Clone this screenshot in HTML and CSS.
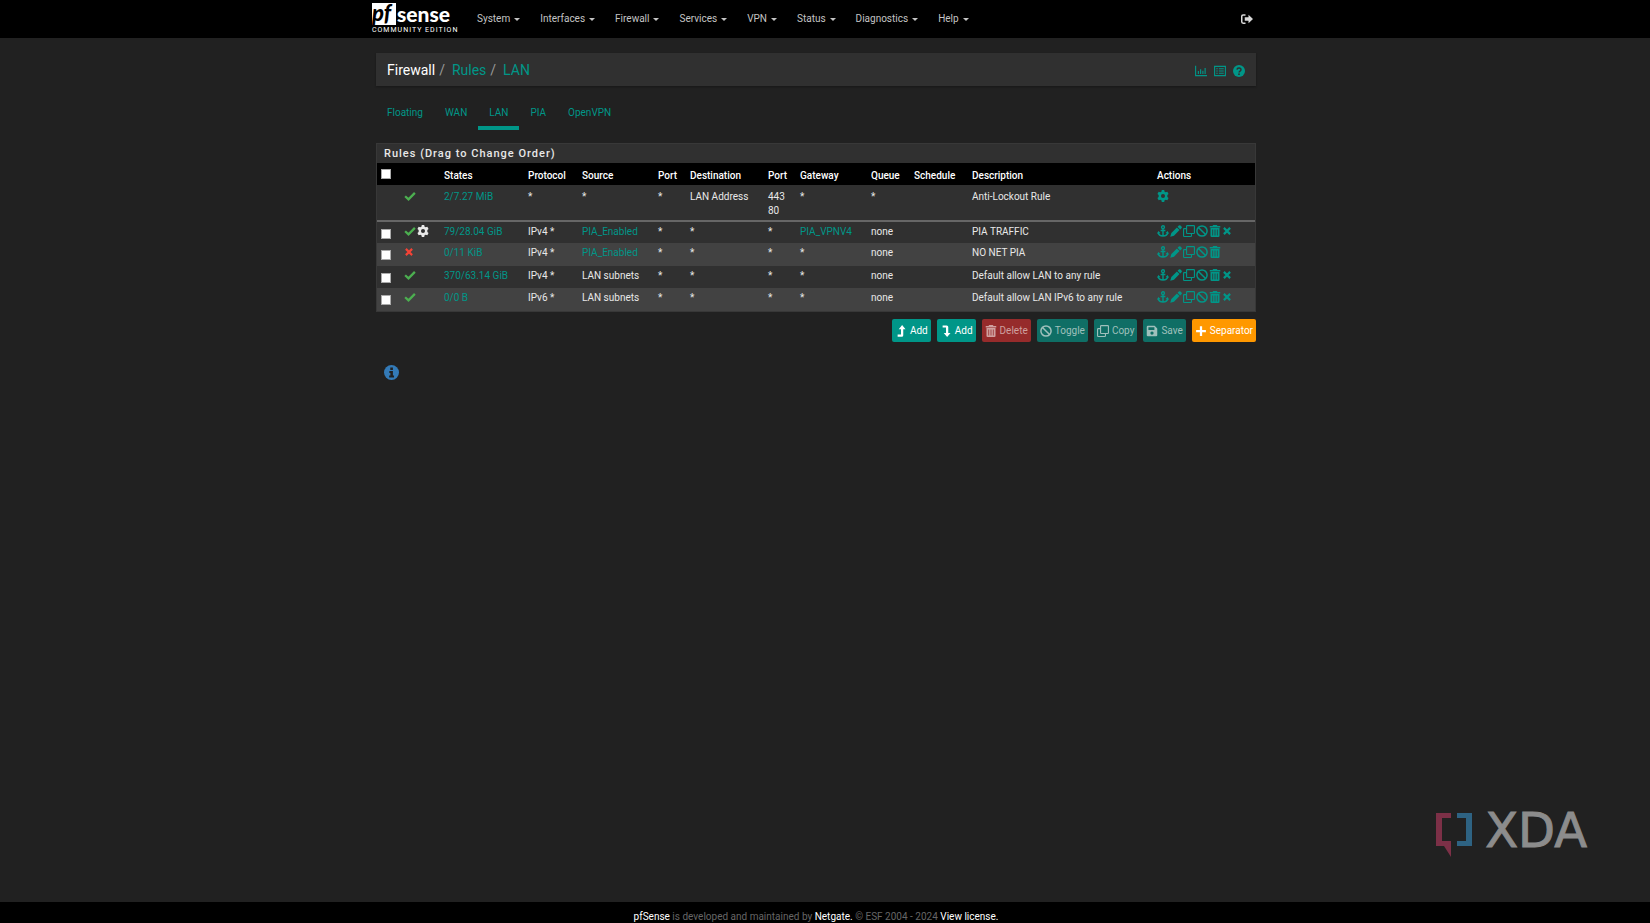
FILE: index.html
```
<!DOCTYPE html>
<html lang="en">
<head>
<meta charset="utf-8">
<title>pfSense - Firewall: Rules: LAN</title>
<link rel="stylesheet" href="styles.css">
</head>
<body>
<svg class="sprite" aria-hidden="true">
  <symbol id="check" viewBox="0 0 16 16"><path d="M1.5 8.300 6 12.500 14.500 3.800" fill="none" stroke="currentColor" stroke-width="3"/></symbol>
  <symbol id="times" viewBox="0 0 16 16"><path d="M3 3 13 13M13 3 3 13" fill="none" stroke="currentColor" stroke-width="3.4"/></symbol>
  <symbol id="cog" viewBox="0 0 16 16"><path fill="currentColor" fill-rule="evenodd" d="M6.4 0h3.2l.5 2.2 1.5.9 2.2-.7 1.6 2.8L13.800 6.800v2.400l1.600 1.600-1.600 2.800-2.200-.7-1.500.9-.5 2.200H6.400l-.5-2.200-1.500-.9-2.200.7L.6 10.800l1.600-1.600V6.800L.6 5.200l1.600-2.800 2.200.7 1.500-.9zM8 5.300a2.700 2.700 0 1 0 0 5.400 2.700 2.700 0 0 0 0-5.400z"/></symbol>
  <symbol id="anchor" viewBox="0 0 16 16"><g fill="none" stroke="currentColor" stroke-width="1.900"><circle cx="8" cy="2.900" r="1.900"/><path d="M8 5v9.500M4.800 7.300h6.400M1.700 9.800c.4 3.200 3 4.900 6.300 4.900s5.900-1.700 6.300-4.900"/></g><path fill="currentColor" d="M0 11.500 1.900 8l2.600 2.800zM16 11.500 14.100 8l-2.600 2.800z"/></symbol>
  <symbol id="pencil" viewBox="0 0 16 16"><path fill="currentColor" d="M11.800.7a1.600 1.600 0 0 1 2.200 0l1.300 1.300a1.600 1.600 0 0 1 0 2.200l-1.700 1.700-3.500-3.500zM9.200 3.300l3.500 3.500-7.400 7.400L.3 15.700l1.500-5z"/></symbol>
  <symbol id="clone" viewBox="0 0 16 16"><g fill="none" stroke="currentColor" stroke-width="1.500"><rect x="4.750" y=".750" width="10.500" height="10.500" rx="1"/><path d="M4.500 4.750H1.750a1 1 0 0 0-1 1v8.500a1 1 0 0 0 1 1h8.500a1 1 0 0 0 1-1V11.500"/></g></symbol>
  <symbol id="ban" viewBox="0 0 16 16"><g fill="none" stroke="currentColor" stroke-width="2"><circle cx="8" cy="8" r="6.800"/><path d="m3.300 3.300 9.400 9.400"/></g></symbol>
  <symbol id="trash" viewBox="0 0 16 16"><path fill="currentColor" fill-rule="evenodd" d="M5.500 0h5l.8 1.200H15v2H1v-2h3.700zM2 4h12v10.500a1.500 1.500 0 0 1-1.500 1.500h-9A1.500 1.500 0 0 1 2 14.500zM4.500 6v8h1V6zm3 0v8h1V6zm3 0v8h1V6z"/></symbol>
  <symbol id="up" viewBox="0 0 16 16"><path fill="currentColor" d="M9.500 0 14 5.500h-3v8a2 2 0 0 1-2 2H3.500v-2.800H8V5.500H5z"/></symbol>
  <symbol id="down" viewBox="0 0 16 16"><path fill="currentColor" d="M9.500 16 14 10.500h-3v-8a2 2 0 0 0-2-2H3.500v2.800H8v7.200H5z"/></symbol>
  <symbol id="save" viewBox="0 0 16 16"><path fill="currentColor" fill-rule="evenodd" d="M2 1h9.500L15 4.500V13.500A1.500 1.500 0 0 1 13.500 15h-11A1.500 1.500 0 0 1 1 13.500V2.500A1.500 1.500 0 0 1 2.500 1zM3.200 3v3.500h8V3zM8 8.500a2.200 2.200 0 1 0 0 4.400 2.200 2.200 0 0 0 0-4.400z"/></symbol>
  <symbol id="plus" viewBox="0 0 16 16"><path d="M8 1.500v13M1.500 8h13" stroke="currentColor" stroke-width="3"/></symbol>
  <symbol id="logout" viewBox="0 0 16 16"><path d="M6 2.500H2.800a1.800 1.800 0 0 0-1.800 1.800v7.400a1.800 1.800 0 0 0 1.800 1.800H6" fill="none" stroke="currentColor" stroke-width="2"/><path fill="currentColor" d="M10 2.200 16 8l-6 5.800v-3.600H5V5.800h5z"/></symbol>
  <symbol id="chart" viewBox="0 0 16 16"><path d="M.8 1v13.200H16M4.500 12V8M7.500 12V5.500M10.500 12V7.500M13.500 12V4" fill="none" stroke="currentColor" stroke-width="1.500"/></symbol>
  <symbol id="list" viewBox="0 0 16 16"><path d="M.8 1.800h14.400v12.400H.8zM3 5h2M6.500 5H13M3 8h2M6.500 8H13M3 11h2M6.500 11H13" fill="none" stroke="currentColor" stroke-width="1.500"/></symbol>
  <symbol id="question" viewBox="0 0 16 16"><circle cx="8" cy="8" r="8" fill="currentColor"/><path d="M5.300 6.200c.2-3 5.400-2.900 5.400.1 0 1.900-2.600 1.900-2.600 3.600" fill="none" stroke="#303030" stroke-width="1.900"/><circle cx="8" cy="12.200" r="1.200" fill="#303030"/></symbol>
  <symbol id="info" viewBox="0 0 16 16"><circle cx="8" cy="8" r="8" fill="currentColor"/><path d="M6.700 2.700h2.800v2.500H6.700zM5.700 6.500h3.800v4.800h1.200v2H5.500v-2h1.300V8.500H5.700z" fill="#212121"/></symbol>
</svg>

<header class="navbar">
  <div class="container navbar-row">
    <a class="brand" href="#" aria-label="pfSense Community Edition">
      <span class="brand-name"><span class="brand-pf">pf</span><span class="brand-sense">sense</span></span>
      <span class="brand-edition">COMMUNITY EDITION</span>
    </a>
    <nav class="menu">
      <a href="#">System</a><a href="#">Interfaces</a><a href="#">Firewall</a><a href="#">Services</a><a href="#">VPN</a><a href="#">Status</a><a href="#">Diagnostics</a><a href="#">Help</a>
    </nav>
    <a class="logout" href="#" aria-label="Log out"><svg class="icon"><use href="#logout"/></svg></a>
  </div>
</header>

<main class="container page">
  <div class="page-header">
    <nav class="crumbs"><span>Firewall</span><i>/</i><a href="#">Rules</a><i>/</i><a href="#">LAN</a></nav>
    <div class="shortcuts">
      <a href="#" aria-label="Status"><svg class="icon"><use href="#chart"/></svg></a>
      <a href="#" aria-label="Logs"><svg class="icon"><use href="#list"/></svg></a>
      <a href="#" aria-label="Help"><svg class="icon"><use href="#question"/></svg></a>
    </div>
  </div>

  <nav class="tabs">
    <a href="#">Floating</a><a href="#">WAN</a><a class="active" href="#">LAN</a><a href="#">PIA</a><a href="#">OpenVPN</a>
  </nav>

  <section class="panel">
    <h2>Rules (Drag to Change Order)</h2>
    <table>
      <colgroup><col class="c-box"><col class="c-icon"><col class="c-states"><col class="c-proto"><col class="c-source"><col class="c-port"><col class="c-dest"><col class="c-port"><col class="c-gate"><col class="c-queue"><col class="c-sched"><col><col class="c-actions"></colgroup>
      <thead>
        <tr><th><input type="checkbox" aria-label="Select all"></th><th></th><th>States</th><th>Protocol</th><th>Source</th><th>Port</th><th>Destination</th><th>Port</th><th>Gateway</th><th>Queue</th><th>Schedule</th><th>Description</th><th>Actions</th></tr>
      </thead>
      <tbody class="fixed-rules">
        <tr><td></td><td><svg class="icon pass"><use href="#check"/></svg></td><td><a href="#">2/7.27 MiB</a></td><td>*</td><td>*</td><td>*</td><td>LAN Address</td><td>443<br>80</td><td>*</td><td>*</td><td></td><td>Anti-Lockout Rule</td><td><a href="#" aria-label="Settings"><svg class="icon"><use href="#cog"/></svg></a></td></tr>
      </tbody>
      <tbody class="user-rules">
        <tr><td><input type="checkbox" aria-label="Select PIA TRAFFIC"></td><td><div class="icons"><svg class="icon pass"><use href="#check"/></svg><svg class="icon"><use href="#cog"/></svg></div></td><td><a href="#">79/28.04 GiB</a></td><td>IPv4 *</td><td><a href="#">PIA_Enabled</a></td><td>*</td><td>*</td><td>*</td><td><a href="#">PIA_VPNV4</a></td><td>none</td><td></td><td>PIA TRAFFIC</td>
          <td><div class="icons"><a href="#" aria-label="Move"><svg class="icon"><use href="#anchor"/></svg></a><a href="#" aria-label="Edit"><svg class="icon"><use href="#pencil"/></svg></a><a href="#" aria-label="Copy"><svg class="icon"><use href="#clone"/></svg></a><a href="#" aria-label="Disable"><svg class="icon"><use href="#ban"/></svg></a><a href="#" aria-label="Delete"><svg class="icon"><use href="#trash"/></svg></a><a class="kill" href="#" aria-label="Kill states"><svg class="icon"><use href="#times"/></svg></a></div></td></tr>
        <tr><td><input type="checkbox" aria-label="Select NO NET PIA"></td><td><svg class="icon block"><use href="#times"/></svg></td><td><a href="#">0/11 KiB</a></td><td>IPv4 *</td><td><a href="#">PIA_Enabled</a></td><td>*</td><td>*</td><td>*</td><td>*</td><td>none</td><td></td><td>NO NET PIA</td>
          <td><div class="icons"><a href="#" aria-label="Move"><svg class="icon"><use href="#anchor"/></svg></a><a href="#" aria-label="Edit"><svg class="icon"><use href="#pencil"/></svg></a><a href="#" aria-label="Copy"><svg class="icon"><use href="#clone"/></svg></a><a href="#" aria-label="Disable"><svg class="icon"><use href="#ban"/></svg></a><a href="#" aria-label="Delete"><svg class="icon"><use href="#trash"/></svg></a></div></td></tr>
        <tr><td><input type="checkbox" aria-label="Select default LAN rule"></td><td><svg class="icon pass"><use href="#check"/></svg></td><td><a href="#">370/63.14 GiB</a></td><td>IPv4 *</td><td>LAN subnets</td><td>*</td><td>*</td><td>*</td><td>*</td><td>none</td><td></td><td>Default allow LAN to any rule</td>
          <td><div class="icons"><a href="#" aria-label="Move"><svg class="icon"><use href="#anchor"/></svg></a><a href="#" aria-label="Edit"><svg class="icon"><use href="#pencil"/></svg></a><a href="#" aria-label="Copy"><svg class="icon"><use href="#clone"/></svg></a><a href="#" aria-label="Disable"><svg class="icon"><use href="#ban"/></svg></a><a href="#" aria-label="Delete"><svg class="icon"><use href="#trash"/></svg></a><a class="kill" href="#" aria-label="Kill states"><svg class="icon"><use href="#times"/></svg></a></div></td></tr>
        <tr><td><input type="checkbox" aria-label="Select default LAN IPv6 rule"></td><td><svg class="icon pass"><use href="#check"/></svg></td><td><a href="#">0/0 B</a></td><td>IPv6 *</td><td>LAN subnets</td><td>*</td><td>*</td><td>*</td><td>*</td><td>none</td><td></td><td>Default allow LAN IPv6 to any rule</td>
          <td><div class="icons"><a href="#" aria-label="Move"><svg class="icon"><use href="#anchor"/></svg></a><a href="#" aria-label="Edit"><svg class="icon"><use href="#pencil"/></svg></a><a href="#" aria-label="Copy"><svg class="icon"><use href="#clone"/></svg></a><a href="#" aria-label="Disable"><svg class="icon"><use href="#ban"/></svg></a><a href="#" aria-label="Delete"><svg class="icon"><use href="#trash"/></svg></a><a class="kill" href="#" aria-label="Kill states"><svg class="icon"><use href="#times"/></svg></a></div></td></tr>
      </tbody>
    </table>
  </section>

  <div class="buttons">
    <button class="btn" type="button"><svg class="icon"><use href="#up"/></svg>Add</button>
    <button class="btn" type="button"><svg class="icon"><use href="#down"/></svg>Add</button>
    <button class="btn danger" type="button" disabled><svg class="icon"><use href="#trash"/></svg>Delete</button>
    <button class="btn" type="button" disabled><svg class="icon"><use href="#ban"/></svg>Toggle</button>
    <button class="btn" type="button" disabled><svg class="icon"><use href="#clone"/></svg>Copy</button>
    <button class="btn" type="button" disabled><svg class="icon"><use href="#save"/></svg>Save</button>
    <button class="btn warning" type="button"><svg class="icon"><use href="#plus"/></svg>Separator</button>
  </div>

  <a class="info" href="#" aria-label="Information"><svg><use href="#info"/></svg></a>
</main>

<footer class="footer"><a href="#">pfSense</a> is developed and maintained by <a href="#">Netgate.</a> © ESF 2004 - 2024 <a href="#">View license.</a></footer>

<div class="watermark">
  <svg viewBox="0 0 37 44" aria-hidden="true"><path fill="#7c3047" d="M0 0h15v5H6v23h9v16L8 33H0z"/><path fill="#2e6383" d="M21 0h15v33H21v-5h9V5h-9z"/></svg>
  <span>XDA</span>
</div>
</body>
</html>
```
FILE: styles.css
```
* { box-sizing: border-box; }

body {
  margin: 0;
  min-height: 100vh;
  display: flex;
  flex-direction: column;
  background: #212121;
  color: #e8e8e8;
  font: 10px/14px Roboto, "Liberation Sans", sans-serif;
}

a { color: #009688; text-decoration: none; }

.sprite { position: absolute; width: 0; height: 0; }

.icon { display: block; width: 12px; height: 12px; }

.container {
  width: 100%;
  max-width: 898px;
  margin: 0 auto;
  padding-right: 18px;
}

.navbar { background: #000; }

.navbar-row { display: flex; align-items: center; height: 38px; }

.brand { display: flex; flex-direction: column; color: #fff; margin-left: -4px; width: 95px; }
.brand-name { display: flex; align-items: center; height: 22px; }
.brand-pf {
  width: 24px;
  height: 22px;
  background: #fff;
  color: #000;
  font: italic 900 22px/20px Lato, sans-serif;
}
.brand-sense { font: 900 21px/22px Lato, sans-serif; padding-left: 1px; }
.brand-edition { font-size: 7px; line-height: 10px; letter-spacing: 1px; white-space: nowrap; }

.menu { display: flex; flex: 1; }
.menu a { display: flex; align-items: center; gap: 4px; padding: 0 10px; color: #c4c4c4; }
.menu a::after { content: ""; border: 3px solid transparent; border-top-color: currentColor; border-bottom: 0; }
.logout { color: #d8d8d8; padding-right: 3px; }

.page { flex: 1; padding-top: 15px; }

.page-header {
  display: flex;
  align-items: center;
  justify-content: space-between;
  height: 33px;
  padding: 0 11px;
  background: #303030;
  box-shadow: 0 1px 2px rgba(0, 0, 0, .3);
}
.crumbs { display: flex; font-size: 14px; line-height: 18px; color: #fff; }
.crumbs i { font-style: normal; color: #999; padding: 0 7px 0 4px; }
.shortcuts { display: flex; gap: 7px; padding-top: 3px; }

.tabs { display: flex; margin: 13px 0; }
.tabs a { padding: 7px 11px 6px; border-bottom: 4px solid transparent; }
.tabs .active { border-bottom-color: #009688; }

.panel { border: 1px solid #383838; background: #303030; }
.panel h2 { margin: 0; padding: 0 7px; font-size: 11px; line-height: 19px; font-weight: 500; letter-spacing: 1px; }

table { width: 100%; table-layout: fixed; border-collapse: collapse; }
.c-box { width: 23px; }
.c-icon { width: 40px; }
.c-states { width: 84px; }
.c-proto { width: 54px; }
.c-source { width: 76px; }
.c-port { width: 32px; }
.c-dest { width: 78px; }
.c-gate { width: 71px; }
.c-queue { width: 43px; }
.c-sched { width: 58px; }
.c-actions { width: 102px; }

th, td { padding: 3px 4px 2px; text-align: left; vertical-align: top; white-space: nowrap; }
thead tr { height: 22px; background: #000; }
th { padding-top: 6px; font-weight: 500; color: #fff; }
.fixed-rules tr { height: 36px; border-bottom: 2px solid #666; }
.fixed-rules td { padding-top: 5px; padding-bottom: 0; }
.user-rules tr { height: 22px; }
.user-rules tr:nth-child(even) { height: 23px; background: #424242; }

input[type="checkbox"] {
  appearance: none;
  display: block;
  width: 10px;
  height: 10px;
  margin: 4px 0 0;
  background: #fff;
  border: 1px solid #aaa;
}
th input[type="checkbox"] { margin-top: 0; }

.icons { display: flex; gap: 1px; }
.kill .icon { width: 10px; }
.pass { color: #4caf50; }
.block { color: #f44336; width: 10px; }

.buttons { display: flex; justify-content: flex-end; gap: 6px; padding-top: 7px; }
.btn {
  display: flex;
  align-items: center;
  gap: 3px;
  height: 23px;
  padding: 0 3px;
  border: 0;
  border-radius: 2px;
  background: #009688;
  color: #fff;
  font: inherit;
}
.btn.danger { background: #f44336; }
.btn.warning { background: #ff9800; }
.btn:disabled { background: #0f6e65; color: #9fc0bc; }
.btn.danger:disabled { background: #962b2b; color: #cfa09f; }

.info { display: inline-block; margin: 23px 8px; color: #337ab7; }
.info svg { display: block; width: 15px; height: 15px; }

.footer { height: 21px; padding: 8px 18px 0 0; overflow: hidden; background: #000; color: #666; text-align: center; }
.footer a { color: #fff; }

.watermark {
  position: absolute;
  right: 63px;
  bottom: 66px;
  display: flex;
  gap: 12px;
  color: #8c8c8c;
}
.watermark svg { width: 37px; height: 44px; }
.watermark span { font: 48px/35px "DejaVu Sans", sans-serif; -webkit-text-stroke: 1px currentColor; }
```
